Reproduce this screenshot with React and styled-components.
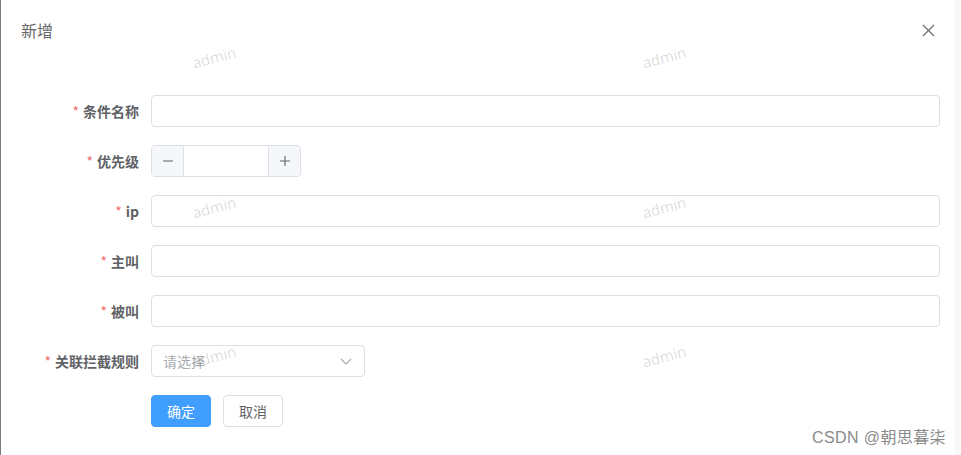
import React from "react";
import styled, { createGlobalStyle } from "styled-components";

const Global = createGlobalStyle`
  html, body { margin: 0; padding: 0; background: #fff; }
  body { font-family: "Liberation Sans", "Noto Sans CJK SC", sans-serif; }
  * { box-sizing: border-box; }
`;

const Page = styled.div`
  display: flex;
  width: 961px;
  height: 455px;
  overflow: hidden;
  position: relative;
`;

const LeftEdge = styled.div`
  width: 1px;
  background: #7a7a7a;
`;

const RightStrip = styled.div`
  width: 6px;
  background: linear-gradient(90deg, #f6f6f6, #fafafa);
`;

const Dialog = styled.div`
  flex: 1;
  display: flex;
  flex-direction: column;
  background: #fff;
  position: relative;
`;

const Header = styled.div`
  display: flex;
  align-items: center;
  justify-content: space-between;
  height: 60px;
  padding: 0 19px 0 20px;
`;

const Title = styled.div`
  font-size: 16px;
  line-height: 16px;
  color: #666;
  font-family: "Noto Sans CJK SC", sans-serif;
`;

const Close = styled.div`
  width: 16px;
  height: 16px;
  display: flex;
  align-items: center;
  justify-content: center;
`;

const Form = styled.div`
  display: flex;
  flex-direction: column;
  gap: 18px;
  padding: 35px 15px 0 0;
`;

const Row = styled.div`
  display: flex;
  align-items: center;
  height: 32px;
`;

const Label = styled.label`
  width: 150px;
  padding-right: 12px;
  text-align: right;
  font-size: 14px;
  line-height: 14px;
  font-weight: bold;
  color: #606266;
  font-family: "Noto Sans CJK SC", sans-serif;
  &::before {
    content: "*";
    color: #f56c6c;
    margin-right: 4px;
    font-weight: normal;
  }
`;

const Input = styled.div`
  flex: ${(p) => (p.$width ? "none" : "1")};
  width: ${(p) => (p.$width ? p.$width + "px" : "auto")};
  height: 32px;
  border: 1px solid #dcdfe6;
  border-radius: 4px;
  background: #fff;
  display: flex;
  align-items: center;
  justify-content: space-between;
  padding: 0 11px 0 11px;
`;

const Placeholder = styled.span`
  font-size: 14px;
  line-height: 14px;
  color: #a8abb2;
  font-family: "Noto Sans CJK SC", sans-serif;
`;

const NumberBox = styled.div`
  display: flex;
  width: 150px;
  height: 32px;
  border: 1px solid #dcdfe6;
  border-radius: 4px;
  overflow: hidden;
`;

const NumBtn = styled.div`
  width: 32px;
  background: #f5f7fa;
  display: flex;
  align-items: center;
  justify-content: center;
  border-${(p) => (p.$side === "left" ? "right" : "left")}: 1px solid #dcdfe6;
`;

const NumField = styled.div`
  flex: 1;
  background: #fff;
`;

const Buttons = styled.div`
  display: flex;
  gap: 12px;
  padding-left: 150px;
`;

const Button = styled.button`
  width: 60px;
  height: 32px;
  border-radius: 4px;
  font-size: 14px;
  line-height: 14px;
  font-family: "Noto Sans CJK SC", sans-serif;
  border: 1px solid ${(p) => (p.$primary ? "#409eff" : "#dcdfe6")};
  background: ${(p) => (p.$primary ? "#409eff" : "#fff")};
  color: ${(p) => (p.$primary ? "#fff" : "#606266")};
  padding: 0;
`;

const Watermark = styled.span`
  position: absolute;
  left: ${(p) => p.$x}px;
  top: ${(p) => p.$y}px;
  font-size: 15px;
  color: rgba(0, 0, 0, 0.16);
  transform: rotate(-15deg);
  pointer-events: none;
  font-family: "Open Sans", "Liberation Sans", sans-serif;
`;

const Credit = styled.span`
  position: absolute;
  right: 9px;
  bottom: 7px;
  font-size: 16px;
  letter-spacing: 0.4px;
  color: #8a8a8a;
  font-family: "Liberation Sans", "Noto Sans CJK SC", sans-serif;
`;

const Minus = () => (
  <svg width="14" height="14" viewBox="0 0 14 14">
    <path d="M2 7h10" stroke="#606266" strokeWidth="1.1" />
  </svg>
);
const Plus = () => (
  <svg width="14" height="14" viewBox="0 0 14 14">
    <path d="M2 7h10M7 2v10" stroke="#606266" strokeWidth="1.1" />
  </svg>
);

const fields = [
  { label: "条件名称" },
  { label: "优先级", type: "number" },
  { label: "ip" },
  { label: "主叫" },
  { label: "被叫" },
  { label: "关联拦截规则", type: "select" },
];

const marks = [
  [192, 47], [642, 47], [192, 197], [642, 197], [192, 346], [642, 346],
];

export default function App() {
  return (
    <>
      <Global />
      <Page>
        <LeftEdge />
        <Dialog>
          <Header>
            <Title>新增</Title>
            <Close>
              <svg width="13" height="13" viewBox="0 0 13 13">
                <path d="M1 1l11 11M12 1L1 12" stroke="#6b6e75" strokeWidth="1.3" />
              </svg>
            </Close>
          </Header>
          <Form>
            {fields.map((f) => (
              <Row key={f.label}>
                <Label>{f.label}</Label>
                {f.type === "number" ? (
                  <NumberBox>
                    <NumBtn $side="left"><Minus /></NumBtn>
                    <NumField />
                    <NumBtn $side="right"><Plus /></NumBtn>
                  </NumberBox>
                ) : f.type === "select" ? (
                  <Input $width={214}>
                    <Placeholder>请选择</Placeholder>
                    <svg width="14" height="14" viewBox="0 0 14 14">
                      <path d="M2 5l5 5 5-5" fill="none" stroke="#a8abb2" strokeWidth="1.1" />
                    </svg>
                  </Input>
                ) : (
                  <Input />
                )}
              </Row>
            ))}
            <Buttons>
              <Button $primary>确定</Button>
              <Button>取消</Button>
            </Buttons>
          </Form>
          {marks.map(([x, y], i) => (
            <Watermark key={i} $x={x - 1} $y={y}>admin</Watermark>
          ))}
          <Credit>CSDN @朝思暮柒</Credit>
        </Dialog>
        <RightStrip />
      </Page>
    </>
  );
}
